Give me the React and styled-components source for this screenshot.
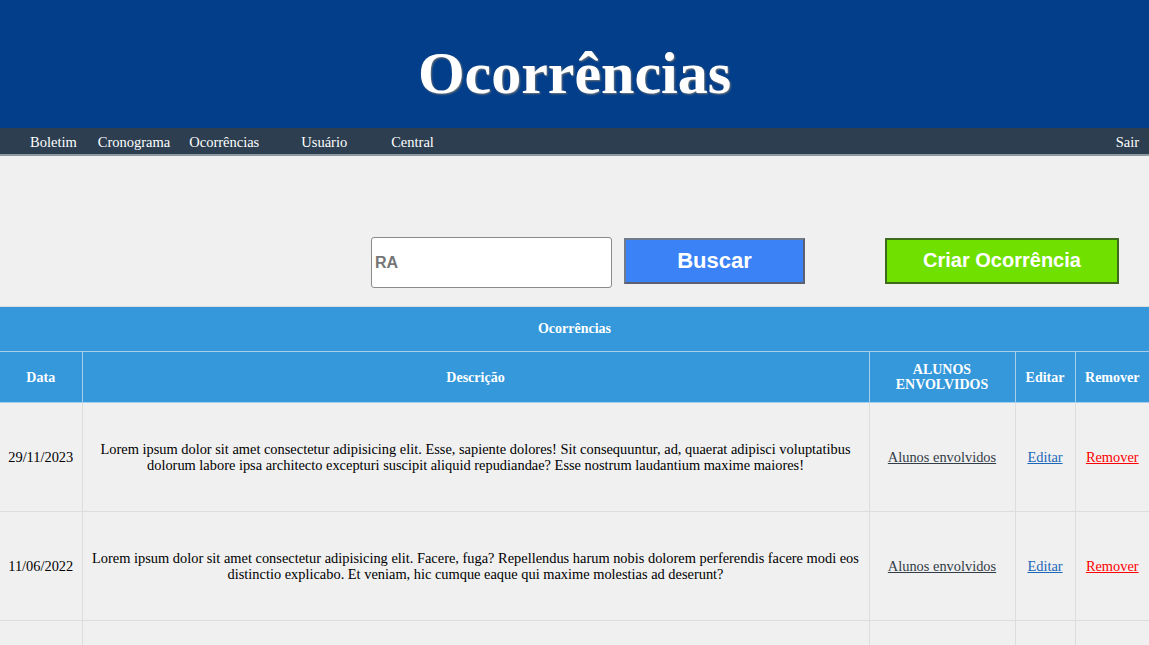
import React from "react";
import styled, { createGlobalStyle } from "styled-components";

const GlobalStyle = createGlobalStyle`
  body {
    margin: 0;
    background: #f0f0f0;
    font-family: "Liberation Serif", "Times New Roman", serif;
  }
`;

const ocorrencias = [
  {
    data: "29/11/2023",
    descricao:
      "Lorem ipsum dolor sit amet consectetur adipisicing elit. Esse, sapiente dolores! Sit consequuntur, ad, quaerat adipisci voluptatibus dolorum labore ipsa architecto excepturi suscipit aliquid repudiandae? Esse nostrum laudantium maxime maiores!",
  },
  {
    data: "11/06/2022",
    descricao:
      "Lorem ipsum dolor sit amet consectetur adipisicing elit. Facere, fuga? Repellendus harum nobis dolorem perferendis facere modi eos distinctio explicabo. Et veniam, hic cumque eaque qui maxime molestias ad deserunt?",
  },
  {
    data: "05/03/2022",
    descricao:
      "Lorem ipsum dolor sit amet consectetur adipisicing elit. Quasi, dolore? Aliquam nemo vero in sunt, voluptas officiis.",
  },
];

const links = [
  { nome: "Boletim", espaco: 21 },
  { nome: "Cronograma", espaco: 19 },
  { nome: "Ocorrências", espaco: 42 },
  { nome: "Usuário", espaco: 44 },
  { nome: "Central", espaco: 0 },
];

const App = () => {
  return (
    <>
      <GlobalStyle />
      <Header>
        <Title>Ocorrências</Title>
      </Header>
      <Nav>
        <NavList>
          {links.map((l) => (
            <NavLink key={l.nome} $space={l.espaco}>
              {l.nome}
            </NavLink>
          ))}
        </NavList>
        <NavLink $space={0}>Sair</NavLink>
      </Nav>
      <Main>
        <SearchRow>
          <SearchInput type="text" placeholder="RA" />
          <SearchBtn type="button">Buscar</SearchBtn>
          <CreateBtn type="button">Criar Ocorrência</CreateBtn>
        </SearchRow>
        <Table>
          <colgroup>
            <col style={{ width: 82 }} />
            <col />
            <col style={{ width: 146 }} />
            <col style={{ width: 60 }} />
            <col style={{ width: 74 }} />
          </colgroup>
          <Caption>Ocorrências</Caption>
          <thead>
            <tr>
              <Th>Data</Th>
              <Th>Descrição</Th>
              <Th>ALUNOS ENVOLVIDOS</Th>
              <Th>Editar</Th>
              <Th>Remover</Th>
            </tr>
          </thead>
          <tbody>
            {ocorrencias.map((o, i) => (
              <tr key={i}>
                <Td>{o.data}</Td>
                <Td $wide>{o.descricao}</Td>
                <Td>
                  <ActionLink href="#" $color="#333d47">
                    Alunos envolvidos
                  </ActionLink>
                </Td>
                <Td>
                  <ActionLink href="#" $color="#1b68b8">
                    Editar
                  </ActionLink>
                </Td>
                <Td>
                  <ActionLink href="#" $color="#ff0000">
                    Remover
                  </ActionLink>
                </Td>
              </tr>
            ))}
          </tbody>
        </Table>
      </Main>
    </>
  );
};

export default App;

const Header = styled.header`
  height: 128px;
  background-color: #023e8a;
  display: flex;
  align-items: center;
  justify-content: center;
`;

const Title = styled.h1`
  margin: 18px 0 0;
  color: #ffffff;
  font-size: 60px;
  font-weight: bold;
  text-shadow: 1px 1px 2px #777;
`;

const Nav = styled.nav`
  box-sizing: content-box;
  height: 23px;
  padding: 3px 10px 0 30px;
  background-color: #2c3e50;
  border-bottom: 2px solid #8e99a3;
  display: flex;
  align-items: center;
  justify-content: space-between;
`;

const NavList = styled.div`
  display: flex;
  align-items: center;
`;

const NavLink = styled.a`
  color: #ffffff;
  font-size: 14.5px;
  margin-right: ${(p) => p.$space}px;
  text-decoration: none;
  cursor: pointer;
`;

const Main = styled.main`
  padding-top: 81px;
`;

const SearchRow = styled.div`
  display: flex;
  align-items: center;
  padding-left: 371px;
  height: 51px;
  margin-bottom: 18px;
`;

const SearchInput = styled.input`
  box-sizing: border-box;
  width: 241px;
  height: 51px;
  border: 1px solid #8a8a8a;
  border-radius: 3px;
  background: #ffffff;
  padding: 0 3px;
  font-family: "Liberation Sans", Arial, sans-serif;
  font-size: 16px;
  font-weight: bold;
  &::placeholder {
    color: #757575;
  }
`;

const SearchBtn = styled.button`
  box-sizing: border-box;
  margin-left: 12px;
  margin-bottom: 4px;
  width: 181px;
  height: 46px;
  background-color: #3b82f6;
  border: 2px solid #5b6170;
  border-top-color: #6f7a8a;
  border-left-color: #6f7a8a;
  color: #ffffff;
  font-family: "Liberation Sans", Arial, sans-serif;
  font-size: 22px;
  font-weight: bold;
`;

const CreateBtn = styled.button`
  box-sizing: border-box;
  margin-left: 80px;
  margin-bottom: 4px;
  width: 234px;
  height: 46px;
  background-color: #70e000;
  border: 2px solid #3e6a1c;
  color: #ffffff;
  font-family: "Liberation Sans", Arial, sans-serif;
  font-size: 20px;
  font-weight: bold;
`;

const Table = styled.table`
  width: 100%;
  table-layout: fixed;
  border-collapse: collapse;
`;

const Caption = styled.caption`
  height: 44px;
  line-height: 44px;
  background-color: #3498db;
  color: #ffffff;
  font-size: 14px;
  font-weight: bold;
  border-top: 1px solid #dcdcdc;
  border-bottom: 1px solid #a9cdec;
`;

const Th = styled.th`
  height: 50px;
  padding: 0 8px;
  background-color: #3498db;
  color: #ffffff;
  font-size: 14px;
  font-weight: bold;
  line-height: 15px;
  border: 1px solid #a9cdec;
  border-top: none;
  &:first-child {
    border-left: none;
  }
  &:last-child {
    border-right: none;
  }
`;

const Td = styled.td`
  height: 107px;
  padding: 0 ${(p) => (p.$wide ? "8px" : "6px")} 1px;
  text-align: center;
  font-size: 14.4px;
  line-height: 16px;
  color: #000000;
  border: 1px solid #dddddd;
  &:first-child {
    border-left: none;
    padding: 0 0 1px;
  }
  &:last-child {
    border-right: none;
  }
`;

const ActionLink = styled.a`
  color: ${(p) => p.$color};
  text-decoration: underline;
`;
